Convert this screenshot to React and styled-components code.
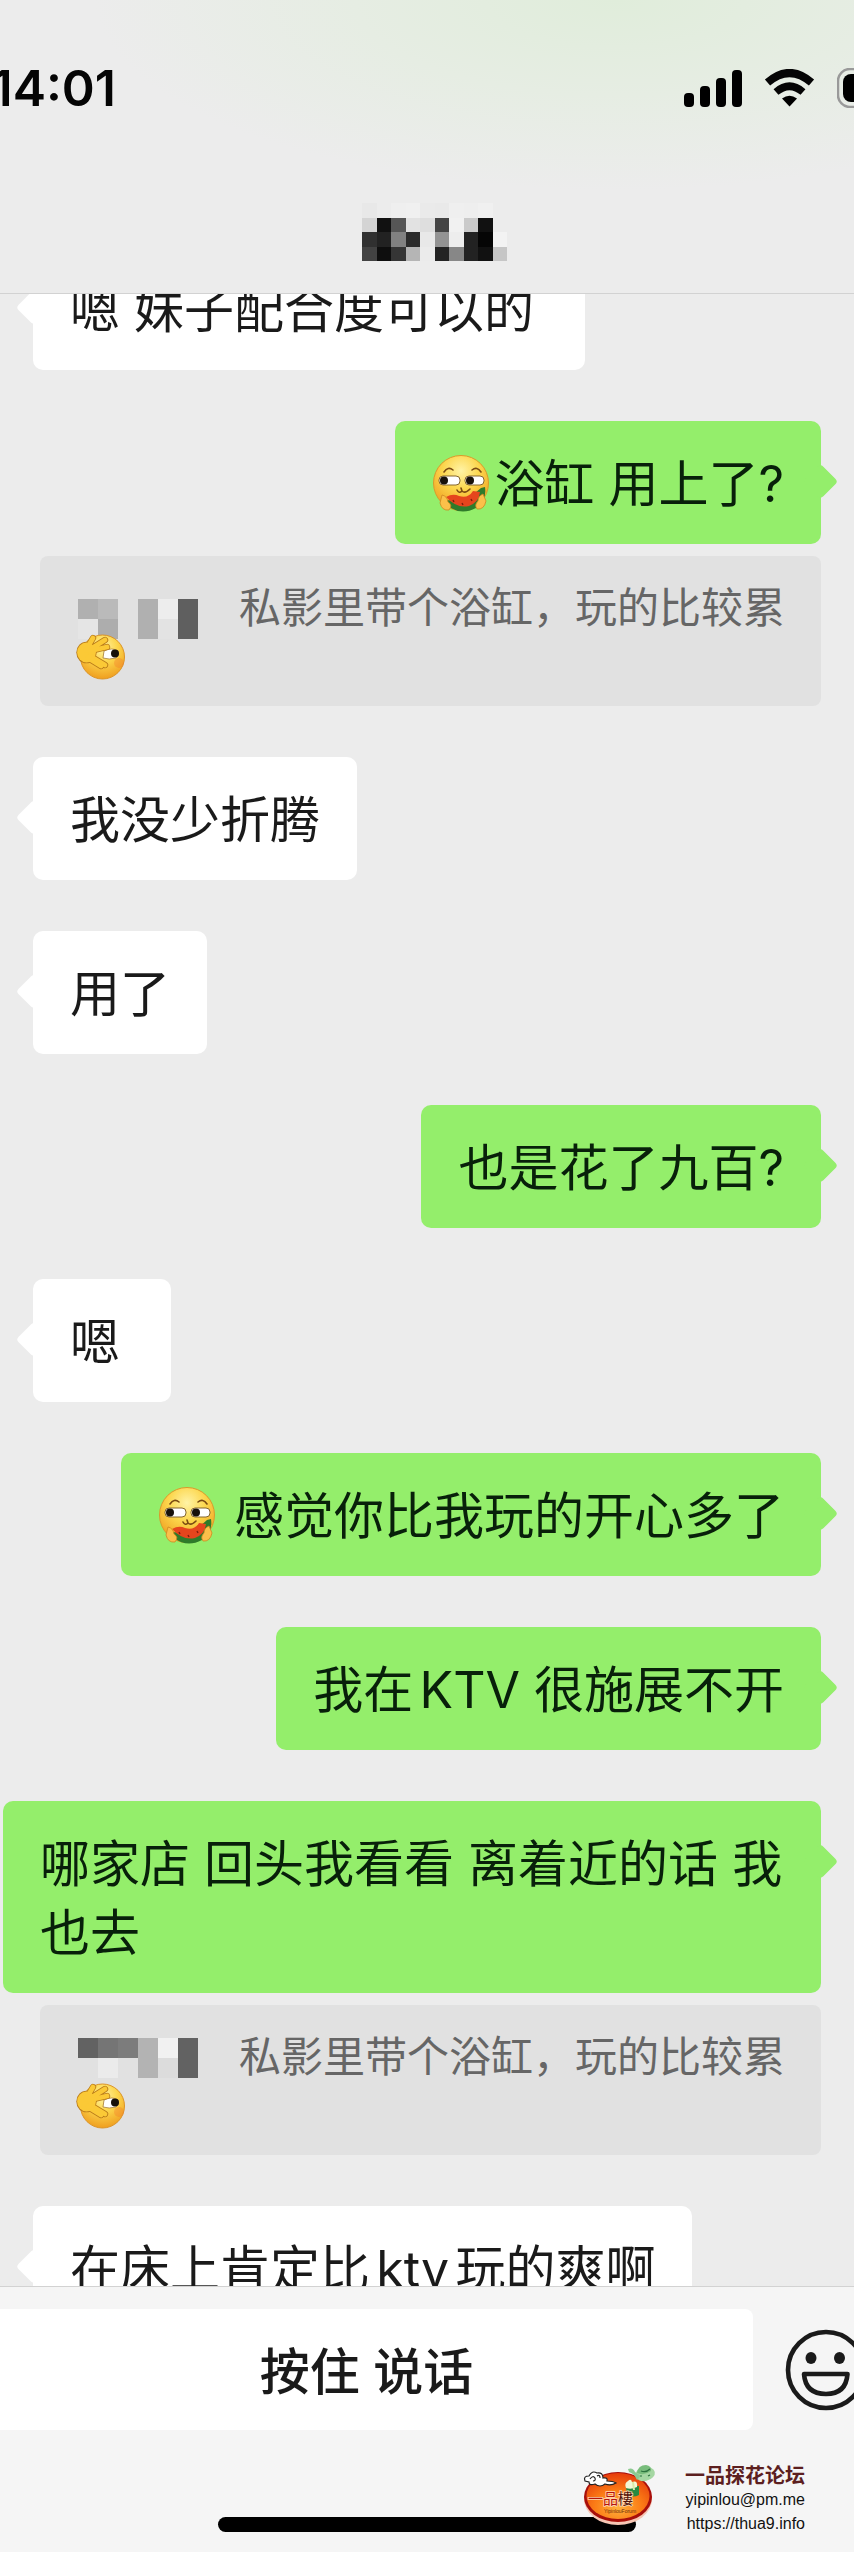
import React from "react";
import styled, { createGlobalStyle } from "styled-components";

const GlobalStyle = createGlobalStyle`
  * {
    box-sizing: border-box;
  }
  body {
    margin: 0;
    background-color: #ececec;
    font-family: Inter, "Noto Sans CJK SC", sans-serif;
  }
`;

const Screen = styled.div`
  position: relative;
  display: flex;
  flex-direction: column;
  min-height: 100vh;
  overflow: hidden;
`;

const Header = styled.header`
  display: flex;
  flex-direction: column;
  gap: 85px;
  padding: 58px 0 32px;
  border-bottom: 1px solid #d2d2d2;
  background: radial-gradient(
      ellipse 520px 190px at 72% 0,
      #e0eddb 0%,
      #e6ede3 50%,
      rgba(236, 236, 236, 0) 100%
    ),
    #ececec;
`;

const StatusBar = styled.div`
  display: flex;
  align-items: center;
  justify-content: space-between;
  height: 60px;
`;

const Time = styled.time`
  display: flex;
  justify-content: flex-end;
  width: 116px;
  font-size: 50px;
  font-weight: 600;
  line-height: 60px;
  color: #050505;
`;

const StatusIcons = styled.div`
  display: flex;
  align-items: center;
  gap: 22px;
`;

const Title = styled.h1`
  display: flex;
  justify-content: center;
  margin: 0;
`;

const Chat = styled.main`
  flex: 1;
  overflow: hidden;
`;

/* the list is scrolled, so its first and last bubbles are cut */
const Messages = styled.ul`
  display: flex;
  flex-direction: column;
  gap: 51px;
  margin: -47px 0 -44px;
  padding: 0 33px 0 3px;
  list-style: none;
`;

const Message = styled.li`
  display: flex;
  flex-direction: column;
  align-items: ${({ $sent }) => ($sent ? "flex-end" : "flex-start")};
  gap: 12px;
  padding-left: ${({ $sent }) => ($sent ? "0" : "30px")};
`;

const Bubble = styled.div`
  position: relative;
  min-width: 138px;
  padding: 29px 37px 25px;
  border-radius: 10px;
  background-color: ${({ $sent }) => ($sent ? "#94ee6b" : "#ffffff")};
  color: ${({ $sent }) => ($sent ? "#08200a" : "#1a1a1a")};
  font-size: 50px;
  line-height: 69px;
  text-autospace: normal;

  &::after {
    content: "";
    position: absolute;
    top: 48px;
    ${({ $sent }) => ($sent ? "right" : "left")}: -12px;
    width: 25px;
    height: 25px;
    border-radius: 4px;
    background-color: inherit;
    transform: rotate(45deg);
  }
`;

const Emoji = styled.svg`
  width: ${({ $size }) => $size}px;
  height: ${({ $size }) => $size}px;
  flex: none;
  vertical-align: -12px;
`;

const Quote = styled.blockquote`
  align-self: stretch;
  margin: 0 0 0 37px;
  padding: 24px 36px 22px;
  border-radius: 8px;
  background-color: #e1e1e1;
  color: #666666;
  font-size: 42px;
  line-height: 56px;
`;

const QuoteLine = styled.div`
  display: flex;
  align-items: flex-start;
  justify-content: space-between;
  height: 52px;
`;

const Footer = styled.footer`
  display: flex;
  flex-direction: column;
  align-items: center;
  gap: 87px;
  padding: 22px 0 20px;
  border-top: 1px solid #d2d2d2;
  background-color: #f5f5f5;
`;

const InputBar = styled.div`
  display: flex;
  align-items: center;
  gap: 32px;
  width: 100%;
`;

const TalkButton = styled.button`
  flex: 1;
  height: 121px;
  padding: 0 20px 4px 0;
  border: none;
  border-radius: 0 8px 8px 0;
  background-color: #ffffff;
  color: #1a1a1a;
  font-family: inherit;
  font-size: 50px;
  font-weight: 500;
  cursor: pointer;
`;

const EmojiButton = styled.button`
  display: flex;
  width: 69px;
  padding: 0;
  border: none;
  background: none;
  overflow: hidden;
  cursor: pointer;

  svg {
    flex: none;
  }
`;

const HomeIndicator = styled.div`
  width: 49%;
  height: 15px;
  border-radius: 8px;
  background-color: #000000;
`;

const Watermark = styled.aside`
  position: absolute;
  right: 49px;
  bottom: 16px;
  display: flex;
  align-items: flex-start;
  gap: 28px;
`;

const Contact = styled.address`
  display: flex;
  flex-direction: column;
  align-items: flex-end;
  font-family: "Liberation Sans", "Noto Sans CJK SC", sans-serif;
  font-size: 16px;
  font-style: normal;
  line-height: 24px;

  a {
    color: #111111;
    text-decoration: none;
  }
`;

const ForumName = styled.strong`
  color: #5c1f1f;
  font-size: 20px;
`;

const titleCells = [
  ["#e8e8e8", "#ececec", "#efefef", "#f0f0f0", "#eaeaea", "#e9e9e9", "#efefef", "#eeeeee", "#f0f0f0", null],
  ["#d4d4d4", "#111111", "#565656", "#e2e2e2", "#dedede", "#444444", "#f1f1f1", "#cacaca", "#111111", null],
  ["#303030", "#222222", "#818181", "#2b2b2b", "#e8e8e8", "#939393", "#ededed", "#222222", "#050505", "#f3f3f3"],
  ["#424242", "#0e0e0e", "#353535", "#b5b5b5", "#ebebeb", "#232323", "#878787", "#222222", "#111111", "#c6c6c6"],
];

const firstNameCells = [
  ["#b0b0b0", "#bababa", null, "#b0b0b0", "#ededed", "#5f5f5f"],
  ["#e5e5e5", "#adadad", null, "#b0b0b0", "#e3e3e3", "#5f5f5f"],
];

const secondNameCells = [
  ["#626262", "#757575", "#7c7c7c", "#b3b3b3", "#f1f1f1", "#626262"],
  [null, "#ebebeb", null, "#b3b3b3", "#dcdcdc", "#626262"],
];

const Cells = ({ cells, x, y, size }) =>
  cells.map((row, r) =>
    row.map((fill, c) =>
      fill ? (
        <rect
          key={`${r}-${c}`}
          x={x + c * size}
          y={y + r * size}
          width={size}
          height={size}
          fill={fill}
          shapeRendering="crispEdges"
        />
      ) : null
    )
  );

const NameMask = ({ cells, top }) => (
  <svg width="122" height="60" viewBox="0 0 122 60" aria-hidden="true">
    <Cells cells={cells} x={2} y={top} size={20} />
  </svg>
);

const FaceGradient = ({ id }) => (
  <defs>
    <radialGradient id={id} cx="50%" cy="28%" r="75%">
      <stop offset="0" stopColor="#fff3a6" />
      <stop offset="0.45" stopColor="#fcd64c" />
      <stop offset="1" stopColor="#ee9a1c" />
    </radialGradient>
  </defs>
);

const MelonEmoji = () => (
  <Emoji $size={62} viewBox="0 0 62 62" aria-hidden="true">
    <FaceGradient id="melonFace" />
    <circle cx="29" cy="31" r="27.5" fill="url(#melonFace)" stroke="#d99a2b" strokeWidth="1" />
    <g fill="none" stroke="#7a4a12" strokeWidth="1.6" strokeLinecap="round">
      <path d="M12 20q4-6 9-2M40 18q5-4 9 2" />
      <path d="M25 38q2 4 5 1q3 3 8-2M30 39l-1-3" />
    </g>
    <rect x="7" y="24" width="21" height="9" rx="4" fill="#fff" stroke="#85662d" />
    <rect x="33" y="24" width="19" height="9" rx="4" fill="#fff" stroke="#85662d" />
    <circle cx="12" cy="28.5" r="4" fill="#17110a" />
    <circle cx="38" cy="28.5" r="4" fill="#17110a" />
    <path d="M13 48Q35 50 49 36l4-1q2 14-9 21q-15 8-28-2z" fill="#2f7b2a" />
    <path d="M14 45q7-4 13-1q9 3 14-5l7 1q-1 10-11 14q-12 3-23-9z" fill="#e5451d" />
    <path d="M21 48l1 2M30 51l1 2M39 47l1 2" stroke="#7f1d0b" strokeWidth="1.4" />
    <path d="M10 43q5 1 6 7q5 3 1 8q-7 1-9-7z" fill="#fbc04a" stroke="#cf861f" strokeWidth="0.8" />
    <path d="M51 42q-5 2-5 7q-4 4-1 8q7 1 9-8z" fill="#fbc04a" stroke="#cf861f" strokeWidth="0.8" />
  </Emoji>
);

const fingers = "M10 18L17 6M13 18L29 8M14 19L31 15M14 24L29 33M12 26L25 34";

const PeekEmoji = () => (
  <Emoji $size={50} viewBox="0 0 50 50" aria-hidden="true">
    <FaceGradient id="peekFace" />
    <circle cx="26.5" cy="25" r="22" fill="url(#peekFace)" stroke="#dc9426" strokeWidth="1" />
    <circle cx="43" cy="31" r="5" fill="#f47a2a" opacity="0.35" />
    <path d="M28 19q8-4 14 0q2 4-2 7q-7 2-13 0z" fill="#fff" stroke="#a57a32" strokeWidth="0.8" />
    <circle cx="39" cy="21.5" r="4" fill="#17110a" />
    <path d={fingers} fill="none" stroke="#b97b1a" strokeWidth="6.4" strokeLinecap="round" />
    <ellipse cx="10.5" cy="20.5" rx="10.2" ry="10.8" fill="#b97b1a" />
    <ellipse cx="10.5" cy="20.5" rx="9.4" ry="10" fill="#fbc936" />
    <path d={fingers} fill="none" stroke="#fbc936" strokeWidth="4.8" strokeLinecap="round" />
  </Emoji>
);

const SignalIcon = () => (
  <svg width="58" height="38" viewBox="0 0 58 38" aria-hidden="true">
    <rect x="0" y="24" width="10" height="14" rx="4" />
    <rect x="16" y="17" width="10" height="21" rx="4" />
    <rect x="32" y="9" width="10" height="29" rx="4" />
    <rect x="48" y="1" width="10" height="37" rx="4" />
  </svg>
);

const WifiIcon = () => (
  <svg width="51" height="38" viewBox="0 0 51 38" aria-hidden="true">
    <path d="M3.500 13.500Q25.500-5.500 47.500 13.500" fill="none" stroke="#050505" strokeWidth="8" />
    <path d="M12 23Q25.500 11.500 39 23" fill="none" stroke="#050505" strokeWidth="7.500" />
    <path d="M18 29.500Q25.500 24 33 29.500L25.500 37.500z" />
  </svg>
);

const BatteryIcon = () => (
  <svg width="17" height="40" viewBox="0 0 17 40" aria-hidden="true">
    <rect x="1" y="1" width="76" height="38" rx="12" fill="none" stroke="#999" strokeWidth="2.500" />
    <rect x="6" y="6" width="66" height="28" rx="8" />
  </svg>
);

const SmileIcon = () => (
  <svg width="82" height="82" viewBox="0 0 82 82" fill="none" aria-hidden="true">
    <circle cx="41" cy="41" r="38" stroke="#1a1a1a" strokeWidth="4.600" />
    <ellipse cx="26" cy="29" rx="5.500" ry="6" fill="#1a1a1a" />
    <ellipse cx="54.500" cy="29" rx="5.500" ry="6" fill="#1a1a1a" />
    <path
      d="M19 45H62.500Q61 65 41 65Q20.500 65 19 45z"
      stroke="#1a1a1a"
      strokeWidth="4.600"
      strokeLinejoin="round"
    />
  </svg>
);

const ForumLogo = () => (
  <svg width="74" height="62" viewBox="0 0 74 62" role="img" aria-label="一品樓">
    <defs>
      <radialGradient id="logoFill" cx="50%" cy="75%" r="75%">
        <stop offset="0" stopColor="#ffb13c" />
        <stop offset="0.5" stopColor="#fb7c16" />
        <stop offset="1" stopColor="#e63c0c" />
      </radialGradient>
    </defs>
    <ellipse cx="35" cy="35" rx="34" ry="26" fill="#f6c6b4" />
    <ellipse cx="35" cy="33" rx="34" ry="25" fill="#a80f0b" />
    <ellipse cx="35" cy="32" rx="31.500" ry="23" fill="url(#logoFill)" />
    <path
      d="M2 17q-2-5 4-5q3-6 8-3q6-1 6 5q5-1 4 3q6 0 9 2q-5 3-11 1q-5 4-10 0q-6 2-6-2z"
      fill="#fff"
      stroke="#222"
      strokeWidth="1.200"
    />
    <path d="M7 15q3-4 5-1q1 3-2 3M14 12q3-2 3 2" fill="none" stroke="#222" strokeWidth="1.200" />
    <path d="M43 22h13v9q-6 3-12 0z" fill="#278a42" />
    <path d="M43 24q-2-5 2-7q3-3 4 1q6-2 5 5q-6 3-11 1z" fill="#f2f8d5" />
    <path d="M50 18l1 8" stroke="#d9e9a8" strokeWidth="2" />
    <ellipse cx="62" cy="10" rx="10" ry="7" fill="#a5d7a2" transform="rotate(-12 62 10)" />
    <path d="M54 9q1-8 9-8q6 1 5 6q-7 5-14 2z" fill="#79bd7c" />
    <path d="M45 5q5-2 7 3l6 4l-4 4q-2-6-8-8z" fill="#8bc991" />
    <path d="M58 7q5 2 9-2M57 12h2M65 12l2-1" fill="none" stroke="#2d7440" strokeWidth="1.200" />
    <text
      x="5"
      y="40"
      fill="#54150b"
      stroke="#ffd9b5"
      strokeWidth="1.500"
      paintOrder="stroke"
      fontFamily="'Noto Sans CJK TC', sans-serif"
      fontSize="15"
      fontWeight="400"
    >
      <tspan fill="#b3140d">一品</tspan>樓
    </text>
    <text x="21" y="49" fill="#6b2a08" fontFamily="'Liberation Sans', sans-serif" fontSize="5">
      YipinlouForum
    </text>
  </svg>
);

const messages = [
  { id: 1, text: "嗯 妹子配合度可以的\u00a0" },
  { id: 2, sent: true, emoji: true, text: "浴缸 用上了?", quote: { cells: firstNameCells, top: 19 } },
  { id: 3, text: "我没少折腾" },
  { id: 4, text: "用了" },
  { id: 5, sent: true, text: "也是花了九百?" },
  { id: 6, text: "嗯" },
  { id: 7, sent: true, emoji: true, text: " 感觉你比我玩的开心多了" },
  { id: 8, sent: true, text: "我在KTV 很施展不开" },
  {
    id: 9,
    sent: true,
    text: "哪家店 回头我看看 离着近的话 我也去",
    quote: { cells: secondNameCells, top: 9 },
  },
  { id: 10, text: "在床上肯定比ktv玩的爽啊" },
];

const ChatMessage = ({ message }) => (
  <Message $sent={message.sent}>
    <Bubble $sent={message.sent}>
      {message.emoji && <MelonEmoji />}
      {message.text}
    </Bubble>
    {message.quote && (
      <Quote>
        <QuoteLine>
          <NameMask cells={message.quote.cells} top={message.quote.top} />
          <span>私影里带个浴缸，玩的比较累</span>
        </QuoteLine>
        <QuoteLine>
          <PeekEmoji />
        </QuoteLine>
      </Quote>
    )}
  </Message>
);

const App = () => {
  return (
    <>
      <GlobalStyle />
      <Screen>
        <Header>
          <StatusBar>
            <Time>14:01</Time>
            <StatusIcons>
              <SignalIcon />
              <WifiIcon />
              <BatteryIcon />
            </StatusIcons>
          </StatusBar>
          <Title>
            <svg width="160" height="58" viewBox="0 0 160 58" aria-hidden="true">
              <Cells cells={titleCells} x={15} y={0} size={14.5} />
            </svg>
          </Title>
        </Header>
        <Chat>
          <Messages>
            {messages.map((message) => (
              <ChatMessage key={message.id} message={message} />
            ))}
          </Messages>
        </Chat>
        <Footer>
          <InputBar>
            <TalkButton type="button">按住 说话</TalkButton>
            <EmojiButton type="button" aria-label="表情">
              <SmileIcon />
            </EmojiButton>
          </InputBar>
          <HomeIndicator />
        </Footer>
        <Watermark>
          <ForumLogo />
          <Contact>
            <ForumName>一品探花论坛</ForumName>
            <a href="mailto:yipinlou@pm.me">yipinlou@pm.me</a>
            <a href="https://thua9.info">https://thua9.info</a>
          </Contact>
        </Watermark>
      </Screen>
    </>
  );
};

export default App;
